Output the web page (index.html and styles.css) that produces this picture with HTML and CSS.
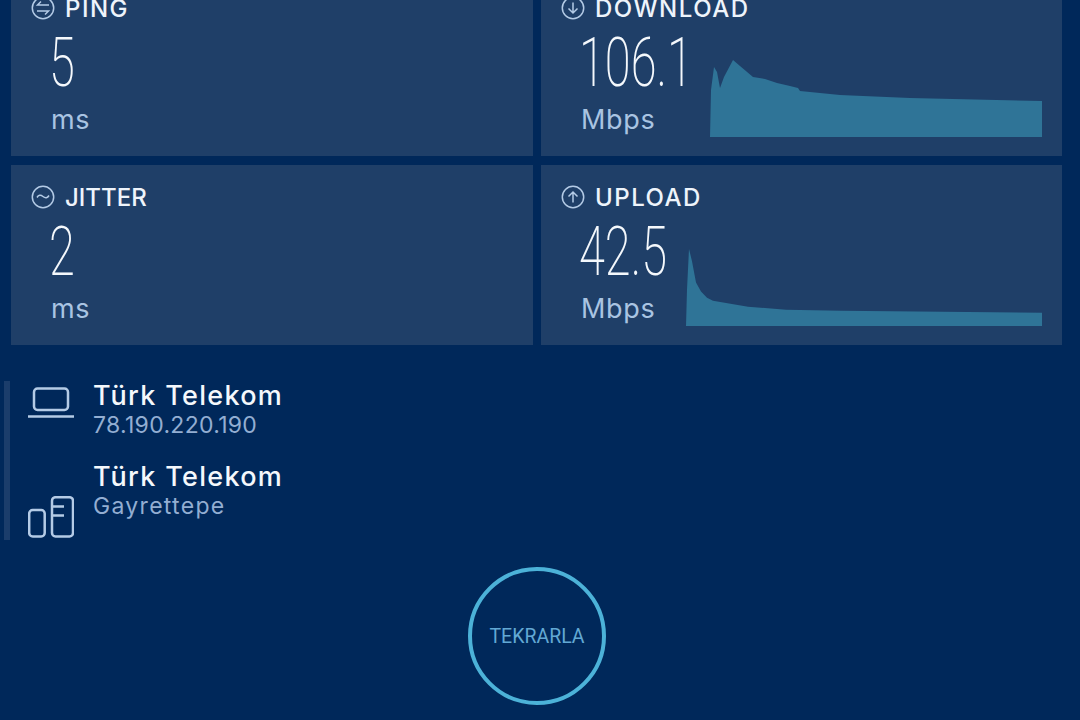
FILE: index.html
```html
<!DOCTYPE html>
<html lang="tr">
<head>
  <meta charset="UTF-8">
  <title>Speedtest</title>
  <link rel="stylesheet" href="styles.css">
</head>
<body>
  <div class="grid">
    <div class="card">
      <div class="label">
        <svg class="icon" viewBox="0 0 24 24"><circle cx="12" cy="12" r="10.7"/><path d="M18 9H6.500L10 5.500M6 15h11.500L14 18.500"/></svg>
        PING
      </div>
      <div class="body">
        <div class="reading">
          <div class="value w-short"><span>5</span></div>
          <div class="unit">ms</div>
        </div>
      </div>
    </div>
    <div class="card">
      <div class="label">
        <svg class="icon" viewBox="0 0 24 24"><circle cx="12" cy="12" r="10.700"/><path d="M12 6.500V17M7.500 12.500 12 17l4.500-4.500"/></svg>
        DOWNLOAD
      </div>
      <div class="body">
        <div class="reading">
          <div class="value w-download"><span>106.1</span></div>
          <div class="unit">Mbps</div>
        </div>
        <svg class="chart" viewBox="0 0 332 77" preserveAspectRatio="none"><path d="M0 77 1 30 4 7 7 12 10 28 14 17 23 0 30 6 43 17 55 19 67 23 80 26 88 28 90 31 110 33 130 35 200 38 332 41V77Z"/></svg>
      </div>
    </div>
    <div class="card">
      <div class="label label-tight">
        <svg class="icon" viewBox="0 0 24 24"><circle cx="12" cy="12" r="10.700"/><path d="M6 12.500c1.500-2.500 3.500-3 6-1s4.500 1.500 6-1"/></svg>
        JITTER
      </div>
      <div class="body">
        <div class="reading">
          <div class="value w-short"><span>2</span></div>
          <div class="unit">ms</div>
        </div>
      </div>
    </div>
    <div class="card">
      <div class="label">
        <svg class="icon" viewBox="0 0 24 24"><circle cx="12" cy="12" r="10.700"/><path d="M12 17.500V7M7.500 11.500 12 7l4.500 4.500"/></svg>
        UPLOAD
      </div>
      <div class="body">
        <div class="reading">
          <div class="value w-upload"><span>42.5</span></div>
          <div class="unit">Mbps</div>
        </div>
        <svg class="chart" viewBox="0 0 356 76" preserveAspectRatio="none"><path d="M0 76 1 40 3 0 6 12 10 33 15 42 21 48 27 51 62 57 100 60 155 61 356 63V76Z"/></svg>
      </div>
    </div>
  </div>

  <div class="info">
    <div class="info-row">
      <svg class="info-icon" viewBox="0 0 46 32"><rect x="6" y="1.500" width="34" height="21.500" rx="3.500"/><path d="M0 29.500h46"/></svg>
      <div>
        <div class="info-title">Türk Telekom</div>
        <div class="info-sub">78.190.220.190</div>
      </div>
    </div>
    <div class="info-row">
      <svg class="info-icon icon-server" viewBox="0 0 46 42"><rect x="1.200" y="14" width="15.500" height="26.500" rx="3.500"/><rect x="24" y="1.200" width="21" height="39.300" rx="3.500"/><path d="M24 10.500h12M24 19.500h12"/></svg>
      <div>
        <div class="info-title">Türk Telekom</div>
        <div class="info-sub info-sub-wide">Gayrettepe</div>
      </div>
    </div>
  </div>

  <div class="action">
    <button class="again">TEKRARLA</button>
  </div>
</body>
</html>
```

FILE: styles.css
```css
body {
  margin: 0;
  height: 720px;
  overflow: hidden;
  background-color: #00285a;
  font-family: 'Inter', 'Noto Sans', sans-serif;
  color: #fff;
}

.grid {
  display: grid;
  grid-template-columns: 522px 521px;
  gap: 9px 8px;
  margin: -24px 0 0 11px;
}

.card {
  height: 180px;
  box-sizing: border-box;
  padding: 21px 20px 0 20px;
  background-color: #1f3f68;
}

.label {
  display: flex;
  align-items: center;
  gap: 10px;
  height: 22px;
  font-size: 24px;
  font-weight: 500;
  letter-spacing: 1.5px;
  color: #eef4fb;
}

.label-tight {
  letter-spacing: 0;
}

.icon {
  width: 24px;
  height: 24px;
  flex: none;
  fill: none;
  stroke: #b4cbe6;
  stroke-width: 1.500;
}

.body {
  display: flex;
  gap: 21px;
  margin-top: 12px;
}

.reading {
  flex: none;
  padding-left: 20px;
}

.value {
  height: 64px;
  margin-left: -2px;
  font-family: 'Roboto', sans-serif;
  font-weight: 200;
  font-size: 68px;
  line-height: 64px;
  color: #f4f8fc;
}

.value span {
  display: inline-block;
  transform: scaleX(0.69);
  transform-origin: left center;
  white-space: nowrap;
}

.w-short { width: 24px; }
.w-download { width: 110px; }
.w-upload { width: 86px; }

.unit {
  margin-top: 9px;
  font-size: 27px;
  letter-spacing: 0.7px;
  line-height: 32px;
  color: #a9c4e2;
}

.chart {
  flex: 1;
  min-width: 0;
  height: 77px;
  margin-top: 29px;
  fill: #2f7497;
}

.info {
  margin: 36px 0 0 4px;
  padding-left: 18px;
  border-left: 6px solid #1b3d6b;
  width: 400px;
  height: 159px;
}

.info-row {
  display: flex;
  gap: 19px;
  height: 81px;
}

.info-icon {
  width: 46px;
  height: 32px;
  flex: none;
  margin-top: 6px;
  fill: none;
  stroke: #b4cbe6;
  stroke-width: 2.500;
}

.icon-server {
  height: 42px;
  margin-top: 34px;
}

.info-title {
  font-size: 27px;
  font-weight: 500;
  letter-spacing: 1.300px;
  line-height: 30px;
  color: #f4f8fc;
}

.info-sub {
  font-size: 23px;
  letter-spacing: 0.300px;
  line-height: 28px;
  color: #93aed2;
}

.info-sub-wide {
  letter-spacing: 1.300px;
}

.action {
  display: flex;
  justify-content: center;
  width: 1074px;
  margin-top: 27px;
}

.again {
  width: 138px;
  height: 138px;
  padding: 0;
  border: 4px solid #4cb2d8;
  border-radius: 50%;
  background: none;
  font-family: 'Roboto', sans-serif;
  font-size: 19.500px;
  color: #62a8d4;
}
```
